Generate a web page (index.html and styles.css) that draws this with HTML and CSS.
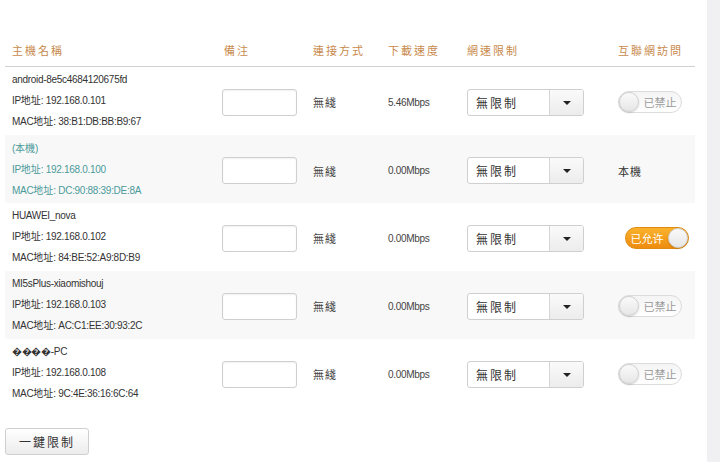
FILE: index.html
```html
<!DOCTYPE html>
<html lang="zh-Hant">
<head>
  <meta charset="UTF-8" />
  <meta name="viewport" content="width=device-width, initial-scale=1.0" />
  <title>主機列表</title>
  <link rel="stylesheet" href="styles.css">
</head>
<body>
  <div class="page">
    <div class="main">
      <div class="row head">
        <div class="c-name">主機名稱</div>
        <div class="c-note">備注</div>
        <div>連接方式</div>
        <div>下載速度</div>
        <div>網速限制</div>
        <div>互聯網訪問</div>
      </div>

      <div class="row">
        <div class="c-name">
          <div>android-8e5c4684120675fd</div>
          <div>IP<span class="cjk">地址</span>: 192.168.0.101</div>
          <div>MAC<span class="cjk">地址</span>: 38:B1:DB:BB:B9:67</div>
        </div>
        <div><input class="note" type="text" /></div>
        <div class="cjk conn">無綫</div>
        <div class="speed">5.46Mbps</div>
        <div class="select"><span class="sel-text">無限制</span><span class="sel-btn"></span></div>
        <div><span class="switch off"><span class="knob"></span><span class="label">已禁止</span></span></div>
      </div>

      <div class="row alt self">
        <div class="c-name">
          <div>(<span class="cjk">本機</span>)</div>
          <div>IP<span class="cjk">地址</span>: 192.168.0.100</div>
          <div>MAC<span class="cjk">地址</span>: DC:90:88:39:DE:8A</div>
        </div>
        <div><input class="note" type="text" /></div>
        <div class="cjk conn">無綫</div>
        <div class="speed">0.00Mbps</div>
        <div class="select"><span class="sel-text">無限制</span><span class="sel-btn"></span></div>
        <div class="cjk local">本機</div>
      </div>

      <div class="row">
        <div class="c-name">
          <div>HUAWEI_nova</div>
          <div>IP<span class="cjk">地址</span>: 192.168.0.102</div>
          <div>MAC<span class="cjk">地址</span>: 84:BE:52:A9:8D:B9</div>
        </div>
        <div><input class="note" type="text" /></div>
        <div class="cjk conn">無綫</div>
        <div class="speed">0.00Mbps</div>
        <div class="select"><span class="sel-text">無限制</span><span class="sel-btn"></span></div>
        <div><span class="switch on"><span class="label">已允许</span><span class="knob"></span></span></div>
      </div>

      <div class="row alt">
        <div class="c-name">
          <div>MI5sPlus-xiaomishouj</div>
          <div>IP<span class="cjk">地址</span>: 192.168.0.103</div>
          <div>MAC<span class="cjk">地址</span>: AC:C1:EE:30:93:2C</div>
        </div>
        <div><input class="note" type="text" /></div>
        <div class="cjk conn">無綫</div>
        <div class="speed">0.00Mbps</div>
        <div class="select"><span class="sel-text">無限制</span><span class="sel-btn"></span></div>
        <div><span class="switch off"><span class="knob"></span><span class="label">已禁止</span></span></div>
      </div>

      <div class="row">
        <div class="c-name">
          <div>&#xFFFD;&#xFFFD;&#xFFFD;&#xFFFD;-PC</div>
          <div>IP<span class="cjk">地址</span>: 192.168.0.108</div>
          <div>MAC<span class="cjk">地址</span>: 9C:4E:36:16:6C:64</div>
        </div>
        <div><input class="note" type="text" /></div>
        <div class="cjk conn">無綫</div>
        <div class="speed">0.00Mbps</div>
        <div class="select"><span class="sel-text">無限制</span><span class="sel-btn"></span></div>
        <div><span class="switch off"><span class="knob"></span><span class="label">已禁止</span></span></div>
      </div>

      <button class="btn">一鍵限制</button>
    </div>
    <div class="side"></div>
  </div>
</body>
</html>
```

FILE: styles.css
```css
body {
  margin: 0;
  background: #fff;
  font-family: "Liberation Sans", Arial, "Noto Sans CJK TC", sans-serif;
  font-size: 10px;
  color: #333;
}
.page {
  display: flex;
  height: 462px;
  overflow: hidden;
}
.main {
  width: 690px;
  padding: 34px 0 0 5px;
}
.side {
  margin-left: 12px;
  flex: 1;
  background: #f0f0f2;
}
.cjk {
  font-family: "Noto Sans CJK TC", sans-serif;
}
.row {
  display: grid;
  grid-template-columns: 217px 91px 75px 79px 151px 77px;
  align-items: center;
  height: 68px;
}
.row.alt {
  background: #f8f8f8;
}
.head {
  height: 32px;
  border-bottom: 1px solid #d0d0d0;
  font-family: "Noto Sans CJK TC", sans-serif;
  font-size: 11px;
  letter-spacing: 2px;
  color: #c8894c;
}
.head .c-note {
  padding-left: 2px;
}
.c-name {
  padding: 3px 0 5px 7px;
  line-height: 20px;
  letter-spacing: -0.3px;
}
.head .c-name {
  padding: 0 0 0 7px;
  letter-spacing: 2px;
}
.c-name .cjk {
  letter-spacing: 0;
}
.self .c-name {
  color: #4b9a9a;
}
.note {
  display: block;
  box-sizing: border-box;
  width: 75px;
  height: 27px;
  margin: 0;
  border: 1px solid #cfcfcf;
  border-radius: 3px;
  box-shadow: inset 0 1px 2px rgba(0,0,0,0.06);
  background: #fff;
}
.conn {
  font-size: 11px;
  letter-spacing: 1px;
  color: #444;
}
.speed {
  letter-spacing: -0.3px;
  color: #444;
}
.select {
  box-sizing: border-box;
  width: 117px;
  height: 27px;
  display: flex;
  border: 1px solid #cfcfcf;
  border-radius: 3px;
  background: #fff;
}
.sel-text {
  flex: 1;
  padding-left: 8px;
  line-height: 25px;
  font-family: "Noto Sans CJK TC", sans-serif;
  font-size: 12px;
  letter-spacing: 2px;
  color: #333;
}
.sel-btn {
  width: 33px;
  border-left: 1px solid #d6d6d6;
  background: linear-gradient(#fafafa, #ececec);
  border-radius: 0 2px 2px 0;
  position: relative;
}
.sel-btn::after {
  content: "";
  position: absolute;
  left: 13px;
  top: 11px;
  border-left: 4px solid transparent;
  border-right: 4px solid transparent;
  border-top: 4px solid #222;
}
.switch {
  box-sizing: border-box;
  width: 64px;
  height: 22px;
  display: flex;
  align-items: center;
  border-radius: 11px;
  font-family: "Noto Sans CJK TC", sans-serif;
  font-size: 11px;
}
.switch.off {
  border: 1px solid #dcdcdc;
  background: linear-gradient(#f4f4f4, #fff);
  color: #9a9a9a;
}
.switch.on {
  margin-left: 7px;
  border: 1px solid #e08a10;
  background: linear-gradient(#f9b22c, #ee8c0e);
  color: #fff;
}
.knob {
  box-sizing: border-box;
  width: 20px;
  height: 20px;
  border-radius: 50%;
  background: linear-gradient(#fafafa, #e6e6e6);
  border: 1px solid #d0d0d0;
  box-shadow: 0 1px 2px rgba(0,0,0,0.15);
}
.switch .label {
  flex: 1;
  text-align: center;
}
.local {
  font-size: 11px;
  letter-spacing: 1px;
  color: #333;
}
.btn {
  display: block;
  margin-top: 21px;
  width: 84px;
  height: 27px;
  border: 1px solid #cfcfcf;
  border-radius: 3px;
  background: linear-gradient(#fff, #ececec);
  font-family: "Noto Sans CJK TC", sans-serif;
  font-size: 12px;
  letter-spacing: 2px;
  color: #333;
  cursor: pointer;
}
```
